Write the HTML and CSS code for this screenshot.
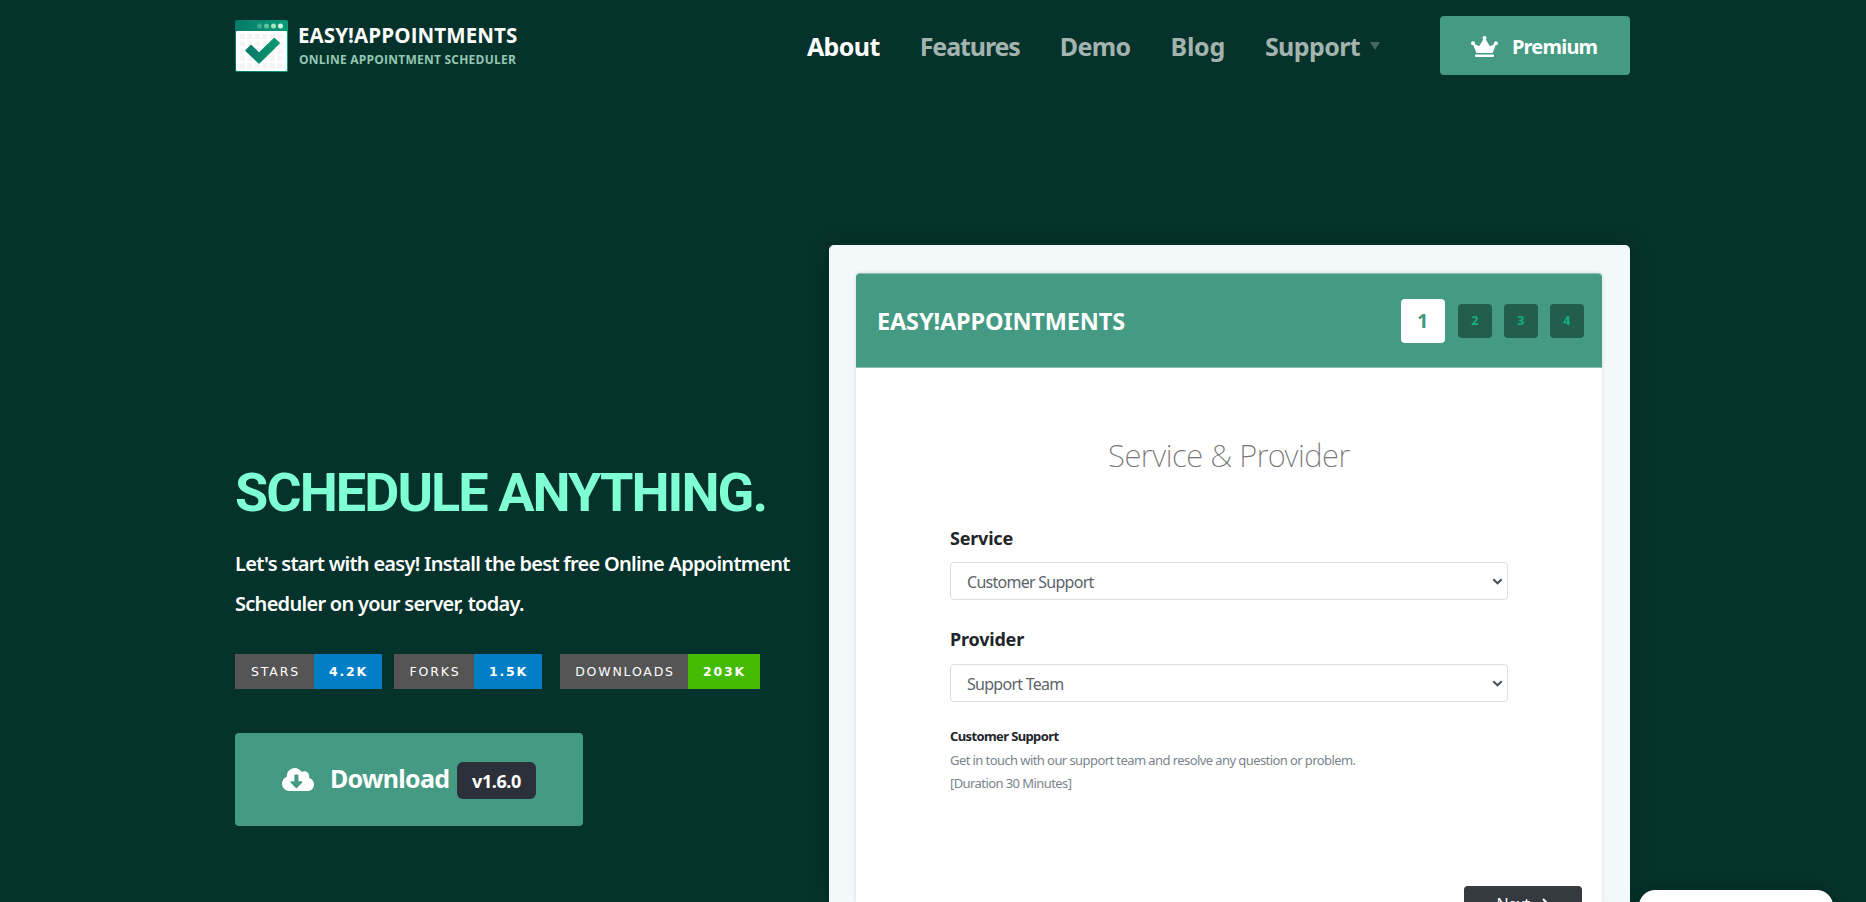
FILE: index.html
```html
<!DOCTYPE html>
<html lang="en">
<head>
    <meta charset="UTF-8" />
    <meta name="viewport" content="width=device-width, initial-scale=1.0"/>
    <title>Easy!Appointments</title>
    <link rel="stylesheet" href="styles.css">
</head>
<body>
    <header class="header">
        <a class="brand">
            <svg class="logo" viewBox="0 0 53 52">
                <defs>
                    <linearGradient id="barFill" x1="0" x2="1">
                        <stop offset="0" stop-color="#067a68"/>
                        <stop offset="1" stop-color="#0a9b78"/>
                    </linearGradient>
                    <linearGradient id="checkFill" x1="0" x2="1">
                        <stop offset="0" stop-color="#07776a"/>
                        <stop offset="1" stop-color="#0b9c72"/>
                    </linearGradient>
                </defs>
                <rect width="53" height="52" rx="2" fill="url(#barFill)"/>
                <rect x="1" y="11" width="51" height="40" rx="1" fill="#fff"/>
                <g fill="#8fd9b4">
                    <circle cx="24.5" cy="6" r="2.5" opacity=".4"/>
                    <circle cx="31.5" cy="6" r="2.5" opacity=".65"/>
                    <circle cx="38.5" cy="6" r="2.5" fill="#a5e3c2"/>
                    <circle cx="45.5" cy="6" r="2.5" fill="#d5f5e3"/>
                </g>
                <g stroke="#f4f4f5" stroke-width="5" stroke-dasharray="5 2.4">
                    <path d="M5 16.5H50M5 23.8H50M5 31H50M5 38.3H50M5 45.5H50"/>
                </g>
                <path d="M10.5 30L15.2 25.2Q16 24.4 16.8 25.2L24 32.3L38.5 18.2Q39.3 17.4 40.1 18.2L44.6 22.4Q45.2 23 44.6 23.7L25 43Q24 44 23 43L10.6 31.2Q10 30.6 10.5 30Z" fill="url(#checkFill)"/>
            </svg>
            <span class="brand-text">
                <span class="brand-name">EASY!APPOINTMENTS</span>
                <span class="brand-sub">ONLINE APPOINTMENT SCHEDULER</span>
            </span>
        </a>
        <nav class="nav">
            <a class="active">About</a>
            <a class="nav-features">Features</a>
            <a>Demo</a>
            <a class="nav-blog">Blog</a>
            <a class="has-menu">Support</a>
        </nav>
        <a class="btn-premium">
            <svg width="27" height="21" viewBox="0 0 640 512" preserveAspectRatio="none">
                <path fill="#fff" d="M528 448H112c-8.800 0-16 7.200-16 16v32c0 8.800 7.200 16 16 16h416c8.800 0 16-7.200 16-16v-32c0-8.800-7.200-16-16-16zm64-320c-26.500 0-48 21.500-48 48 0 7.100 1.600 13.700 4.400 19.800L476 239.200c-15.400 9.200-35.300 4-44.200-11.600L350.300 85C361 76.200 368 63 368 48c0-26.500-21.500-48-48-48s-48 21.500-48 48c0 15 7 28.200 17.700 37l-81.500 142.600c-8.900 15.600-28.900 20.800-44.200 11.600l-72.300-43.400c2.700-6 4.400-12.700 4.400-19.800 0-26.500-21.500-48-48-48S0 149.500 0 176s21.500 48 48 48c2.600 0 5.200-.4 7.700-.8L128 416h384l72.300-192.800c2.500.4 5.100.8 7.700.8 26.500 0 48-21.500 48-48s-21.500-48-48-48z"/>
            </svg>
            <span>Premium</span>
        </a>
    </header>

    <main class="hero">
        <section class="intro">
            <h1>SCHEDULE ANYTHING.</h1>
            <p class="lead">Let's start with easy! Install the best free Online Appointment<br>Scheduler on your server, today.</p>
            <div class="badges">
                <div class="badge stars"><span>STARS</span><b>4.2K</b></div>
                <div class="badge forks"><span>FORKS</span><b>1.5K</b></div>
                <div class="badge downloads"><span>DOWNLOADS</span><b>203K</b></div>
            </div>
            <a class="btn-download">
                <svg width="32" height="23" viewBox="0 32 640 448" preserveAspectRatio="none">
                    <path fill="#fff" d="M537.600 226.600c4.100-10.700 6.400-22.400 6.400-34.600 0-53-43-96-96-96-19.700 0-38.100 6-53.300 16.200C367 64.200 315.300 32 256 32c-88.400 0-160 71.600-160 160 0 2.700.1 5.400.2 8.100C40.200 219.800 0 273.200 0 336c0 79.500 64.500 144 144 144h368c70.700 0 128-57.300 128-128 0-61.900-44-113.600-102.400-125.400zm-132.900 88.700L299.300 420.700c-6.200 6.200-16.400 6.200-22.600 0L171.300 315.300c-10.100-10.100-2.900-27.300 11.300-27.300H248V176c0-8.800 7.200-16 16-16h48c8.800 0 16 7.200 16 16v112h65.400c14.200 0 21.400 17.200 11.300 27.300z"/>
                </svg>
                <span class="download-label">Download</span>
                <span class="version">v1.6.0</span>
            </a>
        </section>

        <section class="preview">
            <div class="booking">
                <div class="booking-header">
                    <span class="booking-title">EASY!APPOINTMENTS</span>
                    <div class="steps">
                        <span class="step current">1</span>
                        <span class="step">2</span>
                        <span class="step">3</span>
                        <span class="step">4</span>
                    </div>
                </div>
                <div class="booking-body">
                    <h2>Service &amp; Provider</h2>
                    <label class="label-service">Service</label>
                    <div class="select">
                        <span>Customer Support</span>
                        <svg width="11" height="7" viewBox="0 0 11 7"><path d="M1.300 1.200L5.500 5.300L9.700 1.200" fill="none" stroke="#495057" stroke-width="2"/></svg>
                    </div>
                    <label class="label-provider">Provider</label>
                    <div class="select">
                        <span>Support Team</span>
                        <svg width="11" height="7" viewBox="0 0 11 7"><path d="M1.300 1.200L5.500 5.300L9.700 1.200" fill="none" stroke="#495057" stroke-width="2"/></svg>
                    </div>
                    <div class="info">
                        <b>Customer Support</b>
                        <span>Get in touch with our support team and resolve any question or problem.</span>
                        <span>[Duration 30 Minutes]</span>
                    </div>
                </div>
                <div class="booking-footer">
                    <span class="btn-next">Next
                        <svg width="8" height="13" viewBox="0 0 8 13"><path d="M1 1L6.500 6.500L1 12" fill="none" stroke="#fff" stroke-width="2"/></svg>
                    </span>
                </div>
            </div>
        </section>
    </main>

    <div class="chat-widget"></div>
</body>
</html>
```
FILE: styles.css
```css
* {
    box-sizing: border-box;
}
body {
    margin: 0;
    height: 902px;
    overflow: hidden;
    background-color: #05322b;
    font-family: "Noto Sans", "Open Sans", sans-serif;
    color: #fff;
    white-space: nowrap;
}
.header {
    display: flex;
    align-items: center;
    height: 91px;
    padding: 0 236px 0 235px;
}
.brand {
    display: flex;
    gap: 10px;
}
.logo {
    width: 53px;
    height: 52px;
}
.brand-text {
    display: flex;
    flex-direction: column;
    padding-top: 1px;
    font-family: "Open Sans", sans-serif;
}
.brand-name {
    font-size: 20.5px;
    line-height: 28px;
    font-weight: 700;
    letter-spacing: 0.1px;
}
.brand-sub {
    padding-left: 1px;
    font-size: 12px;
    line-height: 22px;
    font-weight: 700;
    letter-spacing: 0.23px;
    color: #94c7b2;
}
.nav {
    display: flex;
    gap: 40px;
    margin-left: auto;
    font-size: 25px;
    font-weight: 700;
    letter-spacing: -0.6px;
    color: #a3b3ae;
}
.nav .active {
    color: #fff;
}
.nav-features {
    letter-spacing: -1.1px;
}
.nav-blog {
    letter-spacing: -0.3px;
}
.has-menu {
    display: flex;
    align-items: center;
}
.has-menu::after {
    content: "";
    margin-left: 10px;
    border: 5px solid transparent;
    border-top: 8px solid #47665f;
    border-bottom: 0;
}
.btn-premium {
    display: flex;
    align-items: center;
    width: 190px;
    height: 59px;
    margin-left: 60px;
    padding: 2px 0 0 31px;
    gap: 14px;
    border-radius: 4px;
    background-color: #449a82;
    font-size: 20px;
    font-weight: 700;
    letter-spacing: -0.8px;
}

/* hero */
.hero {
    display: flex;
    height: 811px;
    padding: 154px 236px 0 235px;
    overflow: hidden;
}
.intro {
    width: 594px;
    padding-top: 218px;
}
h1 {
    margin: 0;
    font-family: Roboto, sans-serif;
    font-size: 54px;
    line-height: 60px;
    font-weight: 700;
    letter-spacing: -1.95px;
    color: #7fffd4;
}
.lead {
    margin: 21px 0 30px;
    font-size: 20px;
    line-height: 40px;
    font-weight: 600;
    letter-spacing: -0.72px;
}
.badges {
    display: flex;
    height: 35px;
    font-family: "DejaVu Sans", sans-serif;
    font-size: 12.5px;
    line-height: 35px;
    letter-spacing: 1.8px;
    text-align: center;
}
.badge {
    display: flex;
    margin-right: 12px;
}
.badge span {
    width: 79px;
    padding-left: 2px;
    background-color: #555;
}
.badge b {
    width: 68px;
    padding-left: 1px;
    background-color: #007ec6;
    letter-spacing: 1.8px;
}
.forks {
    margin-right: 18px;
}
.forks span {
    width: 80px;
}
.downloads span {
    width: 128px;
}
.downloads b {
    width: 72px;
    background-color: #44bb00;
}
.btn-download {
    display: flex;
    align-items: center;
    width: 348px;
    height: 93px;
    margin-top: 44px;
    padding-left: 47px;
    border-radius: 4px;
    background-color: #449a82;
}
.download-label {
    margin: -3px 0 0 16px;
    width: 127px;
    font-size: 25px;
    font-weight: 700;
    letter-spacing: -0.7px;
}
.version {
    width: 79px;
    height: 37px;
    margin-top: 2px;
    border-radius: 6px;
    background-color: #2b303a;
    font-size: 18px;
    line-height: 38px;
    font-weight: 700;
    letter-spacing: -0.4px;
    text-align: center;
}

/* booking preview */
.preview {
    width: 801px;
    padding: 28px 28px 0 27px;
    border-radius: 5px 5px 0 0;
    background-color: #f3f8fb;
    box-shadow: 0 0 24px rgba(0, 0, 0, 0.15);
}
.booking {
    height: 100%;
    border-radius: 4px 4px 0 0;
    background-color: #fff;
    box-shadow: 0 0 4px rgba(0, 0, 0, 0.12);
}
.booking-header {
    display: flex;
    align-items: center;
    justify-content: space-between;
    height: 95px;
    padding: 0 18px 0 21px;
    border: 1px solid #8bc0b0;
    border-width: 1px 0;
    border-radius: 4px 4px 0 0;
    background-color: #449a82;
}
.booking-title {
    font-size: 23.5px;
    font-weight: 700;
    letter-spacing: -0.15px;
}
.steps {
    display: flex;
    align-items: center;
    gap: 11.5px;
}
.step {
    width: 34.5px;
    height: 34px;
    border-radius: 4px;
    background-color: #235d4e;
    color: #12b083;
    font-size: 12.5px;
    line-height: 34px;
    font-weight: 700;
    text-align: center;
}
.step.current {
    width: 44.5px;
    height: 44px;
    margin-right: 1px;
    background-color: #fff;
    color: #449a82;
    font-size: 20px;
    line-height: 44px;
}
.booking-body {
    height: 518px;
    padding: 64px 94px 0;
}
h2 {
    margin: 0;
    font-size: 31px;
    line-height: 46px;
    font-weight: 200;
    letter-spacing: -0.45px;
    text-align: center;
    color: #757575;
}
label {
    display: block;
    font-size: 18px;
    line-height: 24px;
    font-weight: 700;
    letter-spacing: -0.2px;
    color: #212529;
}
.label-service {
    margin: 48px 0 12px;
}
.label-provider {
    margin: 27px 0 13px;
}
.select {
    display: flex;
    align-items: center;
    justify-content: space-between;
    height: 38px;
    padding: 0 4px 0 16px;
    border: 1px solid #d9dde5;
    border-radius: 4px;
    font-size: 16px;
    letter-spacing: -0.73px;
    color: #5c636a;
}
.select span {
    padding-top: 2px;
}
.info {
    display: flex;
    flex-direction: column;
    margin-top: 23px;
    font-size: 13px;
    line-height: 23.700px;
    letter-spacing: -0.58px;
    color: #7b848c;
}
.info b {
    color: #212529;
    letter-spacing: -0.62px;
}
.booking-footer {
    display: flex;
    justify-content: flex-end;
    padding-right: 20px;
}
.btn-next {
    display: flex;
    align-items: center;
    justify-content: center;
    gap: 12px;
    width: 118px;
    height: 36px;
    border-radius: 4px 4px 0 0;
    background-color: #343a40;
    font-size: 16px;
    letter-spacing: -0.5px;
}
.chat-widget {
    position: fixed;
    left: 1639px;
    top: 890px;
    width: 194px;
    height: 60px;
    border-radius: 16px;
    background-color: #fff;
    box-shadow: 0 0 14px rgba(0, 0, 0, 0.2);
}
```
